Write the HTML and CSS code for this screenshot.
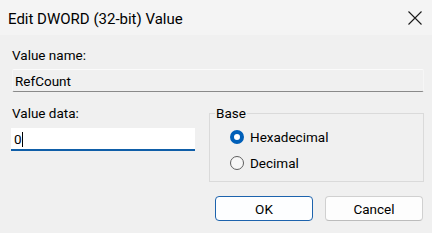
FILE: index.html
```html
<!DOCTYPE html>
<html>
<head>
<meta charset="utf-8">
<link rel="stylesheet" href="styles.css">
</head>
<body>
<div class="dialog">
  <div class="titlebar">
    <span class="title">Edit DWORD (32-bit) Value</span>
    <svg class="close" width="14" height="14" viewBox="0 0 14 14"><path d="M0.5 0.5 L13.5 13.5 M13.5 0.5 L0.5 13.5" stroke="#1a1a1a" stroke-width="1.1" fill="none"/></svg>
  </div>
  <div class="content">
    <div class="label">Value name:</div>
    <div class="namefield">RefCount</div>
    <div class="datarow">
      <div class="datacol">
        <div class="label">Value data:</div>
        <div class="datafield"><span class="val">0</span><span class="caret"></span></div>
      </div>
      <fieldset class="base">
        <legend>Base</legend>
        <div class="radio"><span class="dot checked"></span><span>Hexadecimal</span></div>
        <div class="radio"><span class="dot"></span><span>Decimal</span></div>
      </fieldset>
    </div>
    <div class="buttons">
      <div class="btn default">OK</div>
      <div class="btn">Cancel</div>
    </div>
  </div>
</div>
</body>
</html>
```
FILE: styles.css
```css
html, body {
  margin: 0;
  padding: 0;
  background: #f0f0f0;
}
.dialog {
  width: 432px;
  height: 233px;
  font-family: Roboto, "Noto Sans", sans-serif;
  font-size: 13.5px;
  color: #000;
  background: #f0f0f0;
  overflow: hidden;
}
.titlebar {
  height: 35px;
  background: #f4f4f4;
  display: flex;
  align-items: center;
  justify-content: space-between;
  padding: 0 10px 0 8px;
}
.title {
  font-size: 15px;
  color: #000;
  position: relative;
  top: 1px;
}
.close {
  display: block;
  margin-top: 1px;
}
.content {
  padding: 12px 8px 0 11px;
}
.label {
  line-height: 16px;
  height: 16px;
  padding-left: 1px;
}
.namefield {
  margin-top: 6px;
  margin-left: 1px;
  height: 16px;
  line-height: 16px;
  padding: 3px 2px 2px 2px;
  border-top: 1px solid #fbfbfb;
  border-left: 1px solid #f6f6f6;
  border-right: 1px solid #f6f6f6;
  border-bottom: 1px solid #8a8a8a;
  border-radius: 2px;
}
.datarow {
  margin-top: 13px;
  display: grid;
  grid-template-columns: 184px 215px;
  column-gap: 14px;
  align-items: start;
}
.datafield {
  margin-top: 7px;
  background: #fff;
  height: 16px;
  line-height: 16px;
  padding: 3px 3px 2px 3px;
  border-bottom: 2px solid #0f5ea8;
  display: flex;
  align-items: center;
}
.caret {
  display: inline-block;
  width: 1px;
  height: 15px;
  background: #000;
}
.base {
  margin: 0;
  padding: 3px 0 5px 20px;
  border: 1px solid #dadada;
  min-width: 0;
}
.base legend {
  padding: 0 1px;
  margin-left: -15px;
  line-height: 16px;
}
.radio {
  display: flex;
  align-items: center;
  height: 26px;
  gap: 6px;
}
.dot {
  width: 14px;
  height: 14px;
  border-radius: 50%;
  border: 1px solid #5f5f5f;
  background: #f7f7f7;
  box-sizing: border-box;
}
.dot.checked {
  border: 4px solid #005fb8;
  background: #fff;
}
.buttons {
  margin-top: 14px;
  display: flex;
  justify-content: flex-end;
  gap: 12px;
  padding-right: 1px;
}
.btn {
  width: 98px;
  height: 25px;
  box-sizing: border-box;
  border: 1px solid #d0d0d0;
  border-bottom-color: #bcbcbc;
  border-radius: 4px;
  background: #fdfdfd;
  display: flex;
  align-items: center;
  justify-content: center;
}
.btn.default {
  border: 1px solid #1d63ad;
  background: #fdfeff;
}
```
